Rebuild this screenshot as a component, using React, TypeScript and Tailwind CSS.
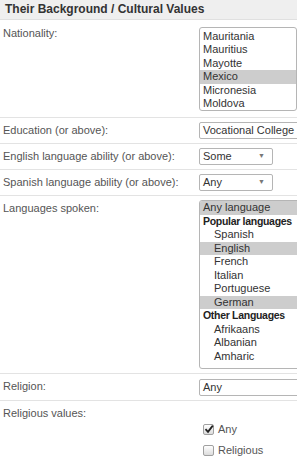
import React from 'react';

type Opt = { label: string; kind?: 'group' | 'child' | 'plain'; selected?: boolean };

const nationalities: Opt[] = [
  { label: 'Martinique' },
  { label: 'Mauritania' },
  { label: 'Mauritius' },
  { label: 'Mayotte' },
  { label: 'Mexico', selected: true },
  { label: 'Micronesia' },
  { label: 'Moldova' },
];

const languages: Opt[] = [
  { label: 'Any language', selected: true },
  { label: 'Popular languages', kind: 'group' },
  { label: 'Spanish', kind: 'child' },
  { label: 'English', kind: 'child', selected: true },
  { label: 'French', kind: 'child' },
  { label: 'Italian', kind: 'child' },
  { label: 'Portuguese', kind: 'child' },
  { label: 'German', kind: 'child', selected: true },
  { label: 'Other Languages', kind: 'group' },
  { label: 'Afrikaans', kind: 'child' },
  { label: 'Albanian', kind: 'child' },
  { label: 'Amharic', kind: 'child' },
];

function OptionRow({ opt }: { opt: Opt }) {
  return (
    <div
      className={`h-[13.5px] leading-[13.5px] whitespace-nowrap ${opt.selected ? 'bg-[#cdcdcd]' : ''} ${
        opt.kind === 'group'
          ? 'pl-[3px] font-bold text-[10.5px] tracking-[-0.3px] text-[#222]'
          : opt.kind === 'child'
            ? 'pl-[14px]'
            : 'pl-[3px]'
      }`}
    >
      {opt.label}
    </div>
  );
}

function Row({ label, children, last }: { label: string; children: React.ReactNode; last?: boolean }) {
  return (
    <div className={`flex py-[4px] ${last ? '' : 'border-b border-[#e3e3e3]'}`}>
      <div className="w-[199px] shrink-0 pl-[3px] pt-[2px] leading-[13px] text-[11px] text-[#555]">{label}</div>
      <div className="flex-1 min-w-0">{children}</div>
    </div>
  );
}

function DropDown({ value, wide }: { value: string; wide?: boolean }) {
  return (
    <div
      className={`h-[17px] border border-[#b5b5b5] rounded-[2px] bg-white flex items-center pl-[3px] text-[11px] text-[#333] ${
        wide ? 'w-[120px]' : 'w-[74px] justify-between pr-[7px]'
      }`}
    >
      <span>{value}</span>
      {!wide && <span className="text-[7px] text-[#777]">▼</span>}
    </div>
  );
}

function CheckBox({ checked, label }: { checked?: boolean; label: string }) {
  return (
    <div className="flex items-center h-[21px] pl-[4px] text-[11px] text-[#555]">
      <span className="relative w-[11px] h-[11px] border border-[#a0a0a0] rounded-[2px] bg-gradient-to-b from-white to-[#dcdcdc] mr-[4px]">
        {checked && (
          <svg viewBox="0 0 10 10" className="absolute left-[0px] top-[-1px] w-[10px] h-[10px]">
            <path d="M1.5 5.2 L4 7.8 L8.8 1.6" fill="none" stroke="#222" strokeWidth="1.8" />
          </svg>
        )}
      </span>
      {label}
    </div>
  );
}

export default function App() {
  return (
    <div className="w-[297px] h-[461px] overflow-hidden bg-white font-['Liberation_Sans',Arial,sans-serif]">
      <div className="h-[20px] bg-[#efefef] border-b border-[#e0e0e0] pl-[5px] text-[12px] font-bold leading-[19px] text-[#333]">
        Their Background / Cultural Values
      </div>

      <div className="flex pt-[7px] pb-[6px] border-b border-[#e3e3e3]">
        <div className="w-[199px] shrink-0 pl-[3px] leading-[13px] text-[11px] text-[#555]">Nationality:</div>
        <div className="h-[84px] w-[120px] border border-[#b5b5b5] rounded-[3px] overflow-hidden text-[11px] text-[#333]">
          {/* list is scrolled: only the descender of the previous entry peeks in */}
          <div className="mt-[-12px]">
            {nationalities.map((o) => (
              <OptionRow key={o.label} opt={o} />
            ))}
          </div>
        </div>
      </div>

      <Row label="Education (or above):">
        <DropDown value="Vocational College" wide />
      </Row>
      <Row label="English language ability (or above):">
        <DropDown value="Some" />
      </Row>
      <Row label="Spanish language ability (or above):">
        <DropDown value="Any" />
      </Row>
      <Row label="Languages spoken:">
        <div className="w-[120px] border border-[#b5b5b5] rounded-[3px] overflow-hidden text-[11px] text-[#333] pb-[5px]">
          {languages.map((o) => (
            <OptionRow key={o.label} opt={o} />
          ))}
        </div>
      </Row>
      <Row label="Religion:">
        <div className="pt-[1px]">
          <DropDown value="Any" wide />
        </div>
      </Row>
      <Row label="Religious values:" last>
        <div className="pt-[14px]">
          <CheckBox checked label="Any" />
          <CheckBox label="Religious" />
        </div>
      </Row>
    </div>
  );
}
